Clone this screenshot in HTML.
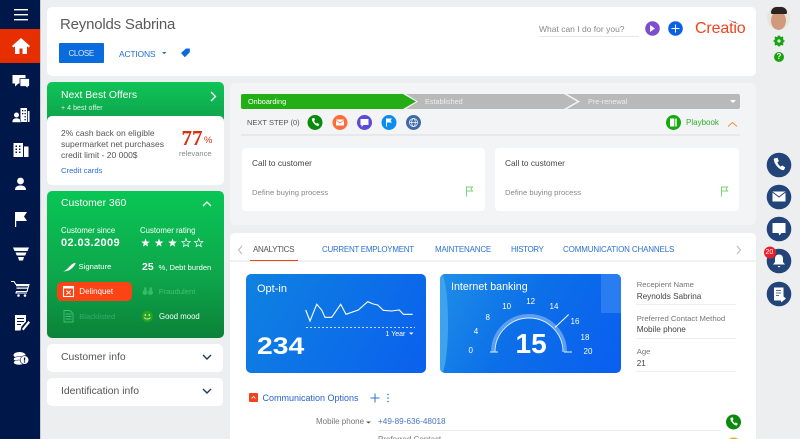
<!DOCTYPE html>
<html><head><meta charset="utf-8"><style>
html,body{margin:0;padding:0;height:439px;overflow:hidden}
body{width:800px;position:relative;background:#eceef0;font-family:"Liberation Sans",sans-serif;color:#444}
div{position:absolute}
.t{position:absolute;white-space:nowrap;line-height:1}
.n{position:absolute;white-space:nowrap;line-height:1;font-size:8px;color:#fff;transform:translate(-50%,-50%)}
svg{position:absolute;left:0;top:0;overflow:visible}
.card{position:absolute;background:#fff;border-radius:5px}
</style></head><body>
<div style="left:0;top:0;width:40px;height:439px;background:#00174a"></div>
<div style="left:40px;top:0;width:1px;height:439px;background:#c9ccd2"></div>
<div style="left:0;top:29px;width:40px;height:34px;background:#e62e00"></div>
<svg width="40" height="439" fill="#fff">
<rect x="14" y="9" width="14" height="1.4"/><rect x="14" y="14" width="14" height="1.4"/><rect x="14" y="19" width="14" height="1.4"/>
<path d="M21 38l-9 8 1.500 1.500 1.500-1.200V54h4.500v-5.500h3V54H27v-7.700l1.500 1.200L30 46z"/>
<path d="M12.500 75h13v8.500h-7l-3.500 3v-3h-2.500z"/><path d="M20 78.500h9.500v8h-1.500v2l-2.500-2H20z" stroke="#00174a" stroke-width=".8"/>
<path d="M20.500 108h6.500v14h-6.500z"/><path d="M27.800 111h1.700v11h-1.700z"/>
<g fill="#00174a"><rect x="22" y="110" width="1.300" height="1.300"/><rect x="24.500" y="110" width="1.300" height="1.300"/><rect x="22" y="113" width="1.300" height="1.300"/><rect x="24.500" y="113" width="1.300" height="1.300"/><rect x="24.500" y="116" width="1.300" height="1.300"/><rect x="24.500" y="119" width="1.300" height="1.300"/></g>
<circle cx="16.500" cy="115" r="2.800" stroke="#00174a" stroke-width=".6"/><path d="M12 122.500c0-3.500 2-4.500 4.500-4.500s4.500 1 4.500 4.500z" stroke="#00174a" stroke-width=".6"/>
<path d="M13.500 143h9.500v14h-9.500zM24 146.500h4.500V157H24z"/>
<g fill="#00174a"><rect x="15.500" y="145.500" width="1.500" height="1.500"/><rect x="19" y="145.500" width="1.500" height="1.500"/><rect x="15.500" y="148.500" width="1.500" height="1.500"/><rect x="19" y="148.500" width="1.500" height="1.500"/><rect x="15.500" y="151.500" width="1.500" height="1.500"/><rect x="19" y="151.500" width="1.500" height="1.500"/></g>
<circle cx="20.500" cy="181" r="3.400"/><path d="M15 190c0-3.500 2.500-4.500 5.500-4.500s5.500 1 5.500 4.500z"/>
<path d="M15 212h1.200v15H15zM16.200 212H27l-3 4.500 3 4.500H16.200z"/>
<path d="M13 247.500h16l-1.500 3.500h-13zM15.500 252.500h11l-1.300 3h-8.400zM18 257h6l-1 3.500h-4z"/>
<path d="M11 281.500h3l2 3h13l-2 7H16.500l-.5 1.500h11" fill="none" stroke="#fff" stroke-width="1.100"/><path d="M16 285h12v1.300H16zM16.500 287.500h11v1.300h-11z"/><circle cx="18.500" cy="295.500" r="1.300"/><circle cx="25" cy="295.500" r="1.300"/>
<path d="M15 315h11v6.500l-4.500 5-1 4h-5.500z"/><path d="M22 329l6.500-8 1.500 1.500-6.500 8z"/><g fill="#00174a"><rect x="17" y="318" width="7" height="1"/><rect x="17" y="321" width="7" height="1"/><rect x="17" y="324" width="4" height="1"/></g>
<ellipse cx="19.500" cy="355" rx="6" ry="3"/><ellipse cx="19" cy="359" rx="5.500" ry="2.500" stroke="#00174a" stroke-width=".5"/><ellipse cx="19" cy="362.500" rx="5.500" ry="2.500" stroke="#00174a" stroke-width=".5"/><circle cx="24.500" cy="360" r="4.300" stroke="#00174a" stroke-width=".6"/><rect x="23.900" y="357.500" width="1.300" height="3.200" fill="#00174a"/><rect x="23.900" y="361.300" width="1.300" height="1.300" fill="#00174a"/>
</svg>

<div class="card" style="left:47px;top:7px;width:709px;height:69px"></div>
<div class="t" style="left:60px;top:17px;font-size:15px;letter-spacing:-.2px;color:#5a5a5a">Reynolds Sabrina</div>
<div style="left:59px;top:43px;width:45px;height:20px;background:#0a6bdc;border-radius:1px"></div>
<div class="t" style="left:68.500px;top:49.500px;font-size:8px;color:#dbe9fb;letter-spacing:-.35px">CLOSE</div>
<div class="t" style="left:119px;top:49.500px;font-size:8.500px;color:#1f6fd1;letter-spacing:-.2px">ACTIONS</div>
<svg width="800" height="439">
<path d="M162 52h4.500l-2.250 2.300z" fill="#1f6fd1"/>
<path d="M181 53l5-4.500h3.800v3.800l-5 5z" fill="#0a6bdc"/>
</svg>
<div class="t" style="left:539px;top:24.500px;font-size:8.500px;color:#888">What can I do for you?</div>
<div style="left:539px;top:36px;width:100px;height:1px;background:#e6e6e6"></div>
<svg width="800" height="439">
<circle cx="652.500" cy="28.500" r="7.300" fill="#7c4dce"/><path d="M650 25v7l5-3.500z" fill="#fff"/>
<circle cx="675.500" cy="28.500" r="7.300" fill="#0b5fe6"/><path d="M675.500 24.500v8M671.500 28.500h8" stroke="#fff" stroke-width="1.100"/>
<path d="M728 19.500l11 4.500-5-1.200z" fill="#1f3a6e"/>
</svg>
<div class="t" style="left:695px;top:21px;font-size:16px;color:#f4411e;letter-spacing:-.15px">Creatio</div>

<!-- NBO -->
<div style="left:47px;top:82px;width:177px;height:50px;border-radius:5px 5px 0 0;background:linear-gradient(#0fc457,#0e9a48)"></div>
<div class="t" style="left:61px;top:91px;font-size:10.400px;color:#fff">Next Best Offers</div>
<div class="t" style="left:61px;top:104.500px;font-size:7px;color:#dff5e6;letter-spacing:.05px">+ 4 best offer</div>
<svg width="800" height="439"><path d="M211 92l4.500 4.500-4.500 4.500" fill="none" stroke="#fff" stroke-width="1.300"/></svg>
<div style="left:47px;top:116px;width:176.500px;height:69px;background:#fff;border-radius:5px"></div>
<div class="t" style="left:61px;top:127.500px;font-size:8.500px;line-height:11px;color:#555">2% cash back on eligible<br>supermarket net purchases<br>credit limit - 20 000$</div>
<div class="t" style="left:181.500px;top:127.500px;font-size:21px;font-weight:bold;font-family:'Liberation Serif',serif;color:#d9300f">77</div>
<div class="t" style="left:204px;top:136px;font-size:9.500px;color:#d9300f">%</div>
<div class="t" style="left:179px;top:150px;font-size:7.500px;color:#888">relevance</div>
<div class="t" style="left:61px;top:166.500px;font-size:7.700px;color:#2a6fd6">Credit cards</div>

<!-- 360 -->
<div style="left:47px;top:191px;width:177px;height:147px;border-radius:5px;background:linear-gradient(#08c655,#0ea84c 55%,#0b8238)"></div>
<div class="t" style="left:61px;top:198.500px;font-size:10.400px;color:#fff">Customer 360</div>
<svg width="800" height="439"><path d="M203 206l4-4 4 4" fill="none" stroke="#fff" stroke-width="1.300"/></svg>
<div class="t" style="left:61px;top:226.500px;font-size:7.800px;color:#fff">Customer since</div>
<div class="t" style="left:61px;top:238px;font-size:11px;font-weight:bold;color:#fff;letter-spacing:.4px">02.03.2009</div>
<div class="t" style="left:140px;top:226.500px;font-size:7.800px;color:#fff">Customer rating</div>
<svg width="800" height="439">
<g fill="#fff"><path id="s" transform="translate(145.500 243)" d="M0-4.500L1.100-1.500 4.300-1.400 1.800.6 2.600 3.600 0 1.900-2.600 3.600-1.800.6-4.300-1.400-1.100-1.500z"/>
<path transform="translate(159 243)" d="M0-4.500L1.100-1.500 4.300-1.400 1.800.6 2.600 3.600 0 1.900-2.600 3.600-1.800.6-4.300-1.400-1.100-1.500z"/>
<path transform="translate(172.500 243)" d="M0-4.500L1.100-1.500 4.300-1.400 1.800.6 2.600 3.600 0 1.900-2.600 3.600-1.800.6-4.300-1.400-1.100-1.500z"/></g>
<g fill="none" stroke="#fff" stroke-width=".7"><path transform="translate(186 243)" d="M0-4.500L1.100-1.500 4.300-1.400 1.800.6 2.600 3.600 0 1.900-2.600 3.600-1.800.6-4.300-1.400-1.100-1.500z"/>
<path transform="translate(198.700 243)" d="M0-4.500L1.100-1.500 4.300-1.400 1.800.6 2.600 3.600 0 1.900-2.600 3.600-1.800.6-4.300-1.400-1.100-1.500z"/></g>
<path d="M62 272c4-1 6-4 9-7 2-1.500 4-2.500 4.500-2 .5 1-3 5.500-6 7-2 1-4 1-7.500 2z" fill="#fff"/></svg>
<div class="t" style="left:78.500px;top:263px;font-size:7.700px;color:#fff">Signature</div>
<div class="t" style="left:142px;top:262px;font-size:10.500px;font-weight:bold;color:#fff">25</div>
<div class="t" style="left:158.500px;top:263.500px;font-size:7.600px;color:#fff">%, Debt burden</div>
<div style="left:57px;top:282px;width:74.500px;height:19px;border-radius:5px;background:#fb4415"></div>
<svg width="800" height="439">
<rect x="63.500" y="286.500" width="10" height="10" fill="none" stroke="#fff" stroke-width="1.100"/><rect x="63.500" y="286" width="10" height="2.500" fill="#fff"/><path d="M66.300 290.500l4.400 4M70.700 290.500l-4.400 4" stroke="#fff"/>
<g fill="#3fc274" opacity=".8"><circle cx="145" cy="292.500" r="2.500"/><circle cx="150.500" cy="292.500" r="2.500"/><rect x="144" y="287.500" width="2.500" height="3"/><rect x="149.500" y="287.500" width="2.500" height="3"/></g>
<path d="M64 310.500h6l3 3v8.500h-9zM65.500 314h6M65.500 316.500h6M65.500 319h6" fill="none" stroke="#3fbf73" stroke-width=".9"/>
<circle cx="147.300" cy="316.500" r="5.500" fill="#2aa61b"/><circle cx="145.300" cy="315" r=".8" fill="#fff"/><circle cx="149.300" cy="315" r=".8" fill="#fff"/><path d="M144.300 317.500c1 2 5 2 6 0" fill="none" stroke="#fff" stroke-width=".8"/>
</svg>
<div class="t" style="left:79.300px;top:288px;font-size:8px;color:#fff">Delinquet</div>
<div class="t" style="left:158.700px;top:287.500px;font-size:7.700px;color:#3fc274">Fraudulent</div>
<div class="t" style="left:79.300px;top:312.700px;font-size:7.500px;color:#32b065">Blacklisted</div>
<div class="t" style="left:159px;top:312.700px;font-size:7.800px;color:#fff">Good mood</div>

<div class="card" style="left:47px;top:344px;width:176px;height:28px"></div>
<div class="t" style="left:61px;top:353px;font-size:10.400px;color:#555">Customer info</div>
<div class="card" style="left:47px;top:378px;width:176px;height:28px"></div>
<div class="t" style="left:61px;top:387px;font-size:10.400px;color:#555">Identification info</div>
<svg width="800" height="439"><path d="M203 355l4 4 4-4M203 389l4 4 4-4" fill="none" stroke="#1c3a66" stroke-width="1.400"/></svg>

<!-- center -->
<div style="left:230px;top:83px;width:526px;height:142px;background:#f3f4f6;border-radius:5px"></div>
<svg width="800" height="439">
<path d="M243 94h160l13 7.500-13 7.500H243a2 2 0 0 1-2-2V96a2 2 0 0 1 2-2z" fill="#22ae14"/>
<path d="M406 94h158l13 7.500-13 7.500H406l12-7.500z" fill="#b9b9b9"/>
<path d="M567 94h171a2 2 0 0 1 2 2v11a2 2 0 0 1-2 2H567l13-7.500z" fill="#b9b9b9"/>
<path d="M730 100h6l-3 3z" fill="#fff"/>
</svg>
<div class="t" style="left:248px;top:98px;font-size:7.300px;color:#fff">Onboarding</div>
<div class="t" style="left:425px;top:98px;font-size:7.300px;color:#eee">Established</div>
<div class="t" style="left:588px;top:98px;font-size:7.300px;color:#eee">Pre-renewal</div>
<div class="t" style="left:247px;top:118.500px;font-size:7.500px;color:#555">NEXT STEP (0)</div>
<div style="left:241px;top:134px;width:499px;height:1.500px;background:#e6e8ea"></div>
<svg width="800" height="439">
<circle cx="315" cy="122.500" r="7.500" fill="#0a8a0a"/><path d="M312 118.500c-1 2 3.500 8 6.500 7.500l.8-1.800-2-1.300-1 .8c-1-.6-1.800-1.700-2.200-2.900l1-.8-.9-2.200z" fill="#fff"/>
<circle cx="340" cy="122.500" r="7.500" fill="#fb6e3c"/><rect x="336" y="119.500" width="8" height="6" fill="#fff"/><path d="M336 120l4 3 4-3" fill="none" stroke="#fb6e3c" stroke-width=".7"/>
<circle cx="364.500" cy="122.500" r="7.500" fill="#5b4bd6"/><path d="M360.500 119h8v6h-5l-2 2v-2h-1z" fill="#fff"/>
<circle cx="389" cy="122.500" r="7.500" fill="#0a8cf0"/><path d="M386 118.500h6l-1.500 2 1.500 2h-5v4h-1z" fill="#fff"/>
<circle cx="413.500" cy="122.500" r="7.500" fill="#3f6aa5"/><g fill="none" stroke="#fff" stroke-width=".7"><circle cx="413.500" cy="122.500" r="4"/><ellipse cx="413.500" cy="122.500" rx="1.800" ry="4"/><path d="M409.500 122.500h8"/></g>
<circle cx="673.500" cy="122.500" r="7.500" fill="#17a80f"/><rect x="670" y="118.500" width="4" height="8" fill="#fff"/><rect x="674.500" y="118.500" width="2.500" height="8" fill="#bde6bb"/>
<path d="M728 126.500l4.500-4 4.500 4" fill="none" stroke="#f09035" stroke-width="1"/>
</svg>
<div class="t" style="left:686px;top:118.500px;font-size:8px;color:#2eb02b">Playbook</div>
<div class="card" style="left:242px;top:148px;width:243px;height:63px;border-radius:4px"></div>
<div class="card" style="left:495px;top:148px;width:244px;height:63px;border-radius:4px"></div>
<div class="t" style="left:252px;top:158.500px;font-size:8.300px;color:#444">Call to customer</div>
<div class="t" style="left:505px;top:158.500px;font-size:8.300px;color:#444">Call to customer</div>
<div class="t" style="left:252px;top:188.500px;font-size:7.700px;color:#888">Define buying process</div>
<div class="t" style="left:505px;top:188.500px;font-size:7.700px;color:#888">Define buying process</div>
<svg width="800" height="439" fill="none" stroke="#7dd07a" stroke-width="1"><path d="M466.500 196.500v-9.500h6l-1.500 2 1.500 2h-6"/><path d="M721.500 196.500v-9.500h6l-1.500 2 1.500 2h-6"/></svg>

<!-- tabs -->
<div style="left:230px;top:233px;width:526px;height:206px;background:#fff;border-radius:5px 5px 0 0"></div>
<div style="left:230px;top:260px;width:526px;height:2px;background:#f0f1f2"></div>
<div style="left:250px;top:259.500px;width:48px;height:1.500px;background:#f0401a"></div>
<svg width="800" height="439" fill="none" stroke="#b4b8bc" stroke-width="1"><path d="M242 246l-3.500 4 3.500 4M737 246l3.500 4-3.500 4"/></svg>
<div class="t" style="left:253px;top:246px;font-size:8px;color:#555;letter-spacing:-.3px">ANALYTICS</div>
<div class="t" style="left:322px;top:246px;font-size:8px;color:#2a73d2;letter-spacing:-.3px">CURRENT EMPLOYMENT</div>
<div class="t" style="left:435px;top:246px;font-size:8px;color:#2a73d2;letter-spacing:-.2px">MAINTENANCE</div>
<div class="t" style="left:511px;top:246px;font-size:8px;color:#2a73d2;letter-spacing:-.4px">HISTORY</div>
<div class="t" style="left:563px;top:246px;font-size:8px;color:#2a73d2;letter-spacing:-.15px">COMMUNICATION CHANNELS</div>

<div style="left:246px;top:274px;width:180px;height:99px;border-radius:5px;background:linear-gradient(120deg,#0f82e0,#0a60ee)"></div>
<div class="t" style="left:257px;top:283.500px;font-size:11px;color:#fff">Opt-in</div>
<svg width="800" height="439">
<path d="M305.700 310L310 321 316.700 304.300 321.700 310 325 317.300 331.700 317.300 340.700 304.300 346 314.300 358.300 310 367.700 301.700 373.300 304 377.700 305 383.300 310.300 391.700 311 399.300 310 403.300 314.300 412.700 314.300" fill="none" stroke="#fff" stroke-width="1.100"/>
<path d="M306 327.500h109" stroke="#fff" stroke-width=".8" stroke-dasharray="2 2"/>
<path d="M409 332.500h4.500l-2.250 2.300z" fill="#fff"/>
</svg>
<div class="t" style="left:385.500px;top:331px;font-size:7px;color:#fff">1 Year</div>
<div class="t" style="left:257px;top:335px;font-size:24px;font-weight:bold;color:#fff;transform:scaleX(1.18);transform-origin:left">234</div>

<div style="left:440px;top:274px;width:181px;height:99px;border-radius:5px;background:linear-gradient(120deg,#1f8fe8,#0c6fe8 45%,#0a5ef0);overflow:hidden">
<div style="left:-6px;top:0;width:14px;height:99px;background:#3da3ec;border-radius:0 60% 60% 0"></div>
<div style="left:161px;top:0;width:20px;height:39px;background:#2a7df0"></div>
</div>
<div class="t" style="left:451px;top:281.500px;font-size:10.700px;color:#fff">Internet banking</div>
<svg width="800" height="439">
<path d="M493 352a36 36 0 0 1 72 0" fill="none" stroke="#5c9ff2" stroke-width="4"/>
<path d="M495 352a34 34 0 0 1 68 0" fill="none" stroke="#dceeff" stroke-width=".9"/>
<path d="M490 352h8M564 352h8" stroke="#bcdcfa" stroke-width="1.200"/>
<path d="M555 327.500l13.700-13" stroke="#fff" stroke-width="1"/>
</svg>
<div class="t" style="left:515.500px;top:330px;font-size:28px;font-weight:bold;color:#fff">15</div>
<div class="n" style="left:470.700px;top:351px">0</div>
<div class="n" style="left:476px;top:332px">4</div>
<div class="n" style="left:487.700px;top:318px">8</div>
<div class="n" style="left:506.700px;top:307px">10</div>
<div class="n" style="left:530.700px;top:302px">12</div>
<div class="n" style="left:554px;top:307px">14</div>
<div class="n" style="left:575px;top:321.500px">16</div>
<div class="n" style="left:585px;top:338px">18</div>
<div class="n" style="left:588px;top:352px">20</div>

<div class="t" style="left:636.700px;top:281.300px;font-size:7.700px;color:#777">Recepient Name</div>
<div class="t" style="left:636.700px;top:292.500px;font-size:8.200px;color:#444">Reynolds Sabrina</div>
<div style="left:636px;top:304px;width:100px;height:1px;background:#eee"></div>
<div class="t" style="left:636.700px;top:314.500px;font-size:7.700px;color:#777">Preferred Contact Method</div>
<div class="t" style="left:636.700px;top:326px;font-size:8.200px;color:#444">Mobile phone</div>
<div style="left:636px;top:338px;width:100px;height:1px;background:#eee"></div>
<div class="t" style="left:636.700px;top:348px;font-size:7.700px;color:#777">Age</div>
<div class="t" style="left:636.700px;top:359.500px;font-size:8.200px;color:#444">21</div>
<div style="left:636px;top:371px;width:100px;height:1px;background:#eee"></div>

<svg width="800" height="439">
<rect x="249" y="393" width="9" height="9" rx="1" fill="#f4431a"/><path d="M251.500 398.500l2-2 2 2" fill="none" stroke="#fff" stroke-width=".8"/>
<path d="M375 393.500v9M370.500 398h9" stroke="#2a73d2" stroke-width="1"/>
<g fill="#2a73d2"><circle cx="388" cy="394.500" r=".8"/><circle cx="388" cy="398" r=".8"/><circle cx="388" cy="401.500" r=".8"/></g>
<path d="M366 421.500h5l-2.500 2z" fill="#555"/>
<circle cx="733.500" cy="422" r="7.500" fill="#0a8a0a"/><path d="M730.500 418c-1 2 3.500 8 6.500 7.500l.8-1.800-2-1.300-1 .8c-1-.6-1.800-1.700-2.200-2.900l1-.8-.9-2.200z" fill="#fff"/>
<circle cx="733.500" cy="445" r="7.500" fill="#f5a623"/>
</svg>
<div class="t" style="left:262.500px;top:393.500px;font-size:9px;color:#2a62c8">Communication Options</div>
<div class="t" style="left:316px;top:418px;font-size:8px;color:#777">Mobile phone</div>
<div class="t" style="left:378px;top:418px;font-size:8.200px;color:#4a74c8">+49-89-636-48018</div>
<div style="left:378px;top:430px;width:342px;height:1px;background:#eee"></div>
<div class="t" style="left:378px;top:436px;font-size:8px;color:#777">Preferred Contact</div>

<!-- right rail -->
<div style="left:767px;top:6px;width:23px;height:24px;border-radius:50%;background:#e8e4de;overflow:hidden">
<div style="left:4px;top:5px;width:15px;height:19px;border-radius:50%;background:#d19a7c"></div>
<div style="left:3.500px;top:1px;width:16px;height:7px;border-radius:8px 8px 2px 2px;background:#2a2320"></div>
</div>
<svg width="800" height="439">
<circle cx="779" cy="41" r="3.500" fill="none" stroke="#18a310" stroke-width="2.500"/>
<path d="M779 35.500v11M773.500 41h11M775 37l8 8M783 37l-8 8" stroke="#18a310" stroke-width="1.600"/><circle cx="779" cy="41" r="1.600" fill="#eceef0"/>
<circle cx="779" cy="57" r="5" fill="#18a310"/>
<g fill="#224478"><circle cx="779" cy="165" r="12.300"/><circle cx="779" cy="197" r="12.300"/><circle cx="779" cy="229" r="12.300"/><circle cx="779" cy="261" r="12.300"/><circle cx="779" cy="294" r="12.300"/></g>
<path d="M774 158.500c-1.500 3 5 12.500 10 11.500l1.200-2.600-3-2-1.500 1.200c-1.500-.9-2.800-2.600-3.300-4.300l1.500-1.200-1.400-3.400z" fill="#fff"/>
<rect x="772.500" y="191.500" width="13" height="10" fill="#fff"/><path d="M772.500 192l6.500 5 6.500-5" fill="none" stroke="#224478"/>
<path d="M772.500 223h13v10h-4l-2 2.500-1-2.500h-6z" fill="#fff"/>
<path d="M779 254.500c-3 0-4 2-4 4.500v3l-2 2.500h12l-2-2.500v-3c0-2.500-1-4.500-4-4.500zM777.500 266h3l-1.500 1.500z" fill="#fff"/>
<circle cx="770" cy="252.500" r="6" fill="#e8202c"/>
<path d="M774 287.500h9.500v13H774z" fill="#fff"/><path d="M776 290.500h5M776 293h5M776 295.500h3" stroke="#224478" stroke-width=".8"/><path d="M781 294.500l5 4-5 4z" fill="#fff"/>
</svg>
<div class="t" style="left:765.500px;top:249px;font-size:7px;color:#fff">20</div>
<div class="t" style="left:776.500px;top:53px;font-size:8px;font-weight:bold;color:#fff">?</div>
</body></html>
